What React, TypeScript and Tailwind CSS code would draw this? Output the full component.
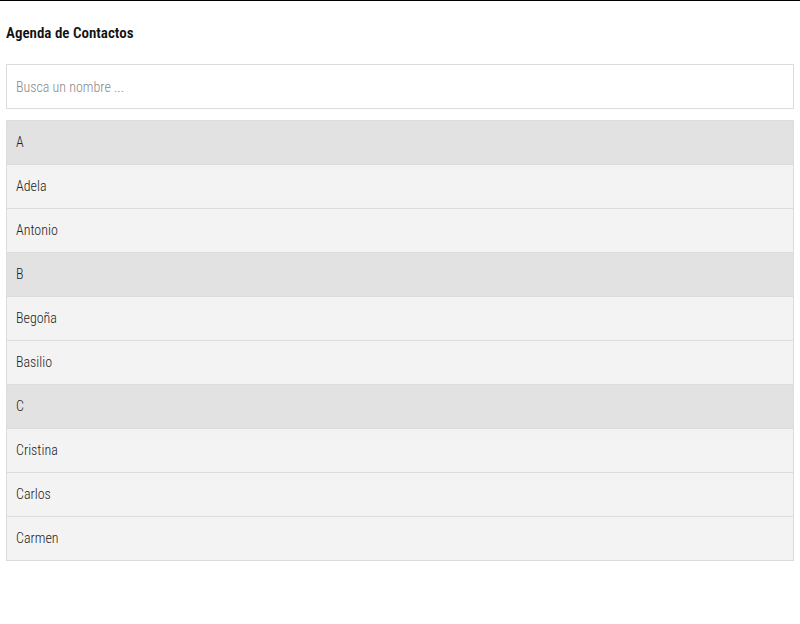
import React from "react";

const groups = [
  { letter: "A", names: ["Adela", "Antonio"] },
  { letter: "B", names: ["Begoña", "Basilio"] },
  { letter: "C", names: ["Cristina", "Carlos", "Carmen"] },
];

export default function App() {
  return (
    <div
      className="min-h-[624px] bg-white border-t border-black px-[6px] text-[#222]"
      style={{ fontFamily: '"Roboto Condensed", "Liberation Sans", Arial, sans-serif' }}
    >
      <h1 className="pt-[23px] pb-[22px] text-[15px] leading-[18px] font-semibold text-[#111]">Agenda de Contactos</h1>
      <input
        className="block w-full h-[45px] border border-[#dcdcdc] px-[9px] text-[14px] font-light outline-none placeholder:text-[#888]"
        placeholder="Busca un nombre ..."
      />
      <div className="mt-[11px] border-l border-r border-b border-[#dcdcdc]">
        {groups.map((g) => (
          <div key={g.letter}>
            <div className="h-[44px] flex items-center px-[9px] bg-[#e2e2e2] border-t border-[#dcdcdc] text-[14px] font-light text-[#222]">
              {g.letter}
            </div>
            {g.names.map((n) => (
              <div
                key={n}
                className="h-[44px] flex items-center px-[9px] bg-[#f3f3f3] border-t border-[#dcdcdc] text-[14px] font-light text-[#222]"
              >
                {n}
              </div>
            ))}
          </div>
        ))}
      </div>
    </div>
  );
}
